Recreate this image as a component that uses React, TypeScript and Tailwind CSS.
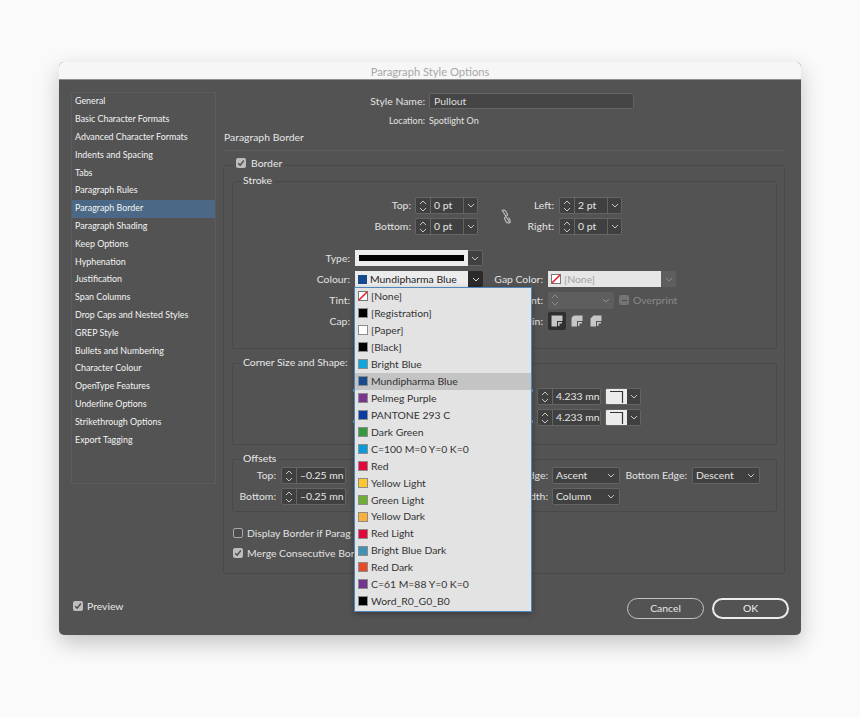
import React from "react";

const FONT = "font-['Lato','Open_Sans',sans-serif]";

const sidebar = [
  "General", "Basic Character Formats", "Advanced Character Formats", "Indents and Spacing", "Tabs",
  "Paragraph Rules", "Paragraph Border", "Paragraph Shading", "Keep Options", "Hyphenation", "Justification",
  "Span Columns", "Drop Caps and Nested Styles", "GREP Style", "Bullets and Numbering", "Character Colour",
  "OpenType Features", "Underline Options", "Strikethrough Options", "Export Tagging",
];

const colours: { name: string; c: string; none?: boolean; sel?: boolean }[] = [
  { name: "[None]", c: "#ffffff", none: true },
  { name: "[Registration]", c: "#000000" },
  { name: "[Paper]", c: "#ffffff" },
  { name: "[Black]", c: "#000000" },
  { name: "Bright Blue", c: "#0fa5df" },
  { name: "Mundipharma Blue", c: "#164b8e", sel: true },
  { name: "Pelmeg Purple", c: "#7b3590" },
  { name: "PANTONE 293 C", c: "#0a3da3" },
  { name: "Dark Green", c: "#35983f" },
  { name: "C=100 M=0 Y=0 K=0", c: "#0a9bd8" },
  { name: "Red", c: "#e4053a" },
  { name: "Yellow Light", c: "#fdc62c" },
  { name: "Green Light", c: "#6dac35" },
  { name: "Yellow Dark", c: "#f8b03a" },
  { name: "Red Light", c: "#e4063c" },
  { name: "Bright Blue Dark", c: "#4092b5" },
  { name: "Red Dark", c: "#e64a2a" },
  { name: "C=61 M=88 Y=0 K=0", c: "#74348e" },
  { name: "Word_R0_G0_B0", c: "#000000" },
];

function Chevron({ up, className }: { up?: boolean; className?: string }) {
  return (
    <svg width="8" height="5" viewBox="0 0 8 5" className={className} fill="none" stroke="currentColor" strokeWidth="1">
      <path d={up ? "M1 4L4 1L7 4" : "M1 1L4 4L7 1"} />
    </svg>
  );
}

function Stepper() {
  return (
    <div className="flex w-[14px] shrink-0 flex-col items-center justify-center gap-[2px] text-[#c4c4c4]">
      <Chevron up />
      <Chevron />
    </div>
  );
}

function Spinner({ value, w, arrow }: { value: string; w: string; arrow?: boolean }) {
  return (
    <div className={`flex h-[17px] ${w} shrink-0 overflow-hidden rounded-[2px] border border-[#646464] bg-[#404040] text-[#e6e6e6]`}>
      <Stepper />
      <div className="flex min-w-0 flex-1 items-center whitespace-nowrap border-l border-[#646464] pl-[3px]">{value}</div>
      {arrow && (
        <div className="flex w-[14px] shrink-0 items-center justify-center border-l border-[#646464] text-[#c4c4c4]">
          <Chevron />
        </div>
      )}
    </div>
  );
}

function Select({ value }: { value: string }) {
  return (
    <div className="flex h-[17px] w-[68px] shrink-0 items-center justify-between rounded-[2px] border border-[#646464] bg-[#404040] pl-[3px] pr-[4px] text-[#e6e6e6]">
      <span>{value}</span>
      <Chevron className="text-[#c4c4c4]" />
    </div>
  );
}

function Label({ w, children, ml }: { w: string; children: React.ReactNode; ml?: string }) {
  return <div className={`${w} ${ml ?? ""} shrink-0 whitespace-nowrap text-right text-[#e2e2e2]`}>{children}</div>;
}

function Check({ on }: { on?: boolean }) {
  return on ? (
    <div className="flex h-[10px] w-[10px] shrink-0 items-center justify-center rounded-[2px] bg-[#bdbdbd]">
      <svg width="8" height="8" viewBox="0 0 8 8" fill="none" stroke="#4a4a4a" strokeWidth="1.3">
        <path d="M1.2 4.2L3.2 6.2L6.8 1.5" />
      </svg>
    </div>
  ) : (
    <div className="h-[10px] w-[10px] shrink-0 rounded-[2px] border border-[#a8a8a8] bg-[#4c4c4c]" />
  );
}

function NoneSwatch({ size }: { size: string }) {
  return (
    <svg viewBox="0 0 10 10" className={`${size} shrink-0`}>
      <rect x="0.5" y="0.5" width="9" height="9" fill="#fff" stroke="#777" />
      <path d="M1 9L9 1" stroke="#ee1c25" strokeWidth="1.6" />
    </svg>
  );
}

function Join({ d }: { d: string }) {
  return (
    <svg width="12" height="12" viewBox="0 0 12 12">
      <path d={d} fill="#c6c6c6" />
      <path d="M7 7H11V8.5H8.5V11H7Z" fill="#c6c6c6" />
    </svg>
  );
}

function CornerBox() {
  return (
    <div className="ml-1 flex h-[17px] w-[36px] shrink-0 overflow-hidden rounded-[2px] border border-[#646464]">
      <div className="flex w-[21px] items-center justify-center bg-[#ececec]">
        <svg width="15" height="13" viewBox="0 0 15 13" fill="none" stroke="#333" strokeWidth="1.2">
          <path d="M1 1.5H13.5V13" />
        </svg>
      </div>
      <div className="flex flex-1 items-center justify-center bg-[#404040] text-[#c4c4c4]">
        <Chevron />
      </div>
    </div>
  );
}

export default function App() {
  const line = "border-[#494949]";
  return (
    <div className={`h-[717px] w-[860px] overflow-hidden bg-[#fafafa] pl-[59px] pt-[62px] text-[10.4px] leading-none ${FONT}`}>
      <div className="relative h-[573px] w-[742px] overflow-hidden rounded-[5px] bg-[#535353] shadow-[0_8px_22px_rgba(0,0,0,0.22)]">
        <div className="flex h-[18px] items-center justify-center border-b border-[#8e8e8e] bg-[#f6f6f6] pt-[2px] text-[11.2px] text-[#a9a9a9]">
          Paragraph Style Options
        </div>

        <div className="flex pl-3 pt-3">
          <div className="h-[392px] w-[145px] shrink-0 border border-[#5b5b5b]">
            {sidebar.map((s) => (
              <div
                key={s}
                className={`flex h-[17.8px] items-center whitespace-nowrap pl-[3px] text-[8.9px] text-[#f4f4f4] ${s === "Paragraph Border" ? "bg-[#4b6986]" : ""}`}
              >
                {s}
              </div>
            ))}
          </div>

          <div className="ml-[7px] w-[562px]">
            <div className="mt-px flex h-4 items-center">
              <Label w="w-[202px]">Style Name:</Label>
              <div className="ml-1 flex h-4 w-[205px] items-center rounded-[2px] border border-[#646464] bg-[#454545] pl-1 text-[#dedede]">Pullout</div>
            </div>
            <div className="mt-[5px] flex h-3 items-center text-[9px] text-[#e2e2e2]">
              <Label w="w-[202px]">Location:</Label>
              <span className="ml-1">Spotlight On</span>
            </div>
            <div className="mt-[4px] flex h-[14px] items-center pl-px text-[#e6e6e6]">Paragraph Border</div>
            <div className="mt-[6px] border-t border-[#5c5c5c]" />

            <div className={`relative mt-[14px] h-[409px] rounded-[3px] border ${line} pl-[8px] pt-[15px]`}>
              <div className="absolute -top-[9px] left-[10px] flex h-[12px] items-center gap-[5px] bg-[#535353] px-[2px] text-[#e8e8e8]">
                <Check on />
                <span>Border</span>
              </div>

              <div className={`relative h-[168px] w-[545px] rounded-[3px] border ${line} pt-[15px]`}>
                <div className="absolute -top-[8px] left-[8px] bg-[#535353] px-[2px] leading-[12px] text-[#e8e8e8]">Stroke</div>

                <div className="flex">
                  <div className="flex w-[245px] flex-col gap-[4px]">
                    <div className="flex items-center">
                      <Label w="w-[178px]">Top:</Label>
                      <div className="ml-1"><Spinner value="0 pt" w="w-[63px]" arrow /></div>
                    </div>
                    <div className="flex items-center">
                      <Label w="w-[178px]">Bottom:</Label>
                      <div className="ml-1"><Spinner value="0 pt" w="w-[63px]" arrow /></div>
                    </div>
                  </div>
                  <div className="flex w-[40px] shrink-0 items-center pl-[22px]">
                    <svg width="12" height="15" viewBox="0 0 12 15" fill="none" stroke="#b8b8b8" strokeWidth="1.2">
                      <path d="M2 1L10 14" />
                      <path d="M2.2 1.4Q5 0.4 6 2.6L7.4 5.2Q7.8 6.6 6.2 7" />
                      <path d="M5.8 8Q4.2 8.4 4.6 9.8L6 12.4Q7 14.6 9.8 13.6Q10.6 12 9.6 10.4L8.6 8.6" />
                    </svg>
                  </div>
                  <div className="flex flex-col gap-[4px]">
                    <div className="flex items-center">
                      <Label w="w-[36px]">Left:</Label>
                      <div className="ml-[5px]"><Spinner value="2 pt" w="w-[63px]" arrow /></div>
                    </div>
                    <div className="flex items-center">
                      <Label w="w-[36px]">Right:</Label>
                      <div className="ml-[5px]"><Spinner value="0 pt" w="w-[63px]" arrow /></div>
                    </div>
                  </div>
                </div>

                <div className="mt-[15px] flex h-4 items-center">
                  <Label w="w-[117px]">Type:</Label>
                  <div className="ml-[5px] flex h-4 w-[113px] items-center bg-[#ececec] px-[4px]">
                    <div className="h-[6px] w-full bg-black" />
                  </div>
                  <div className="flex h-4 w-[15px] items-center justify-center rounded-r-[2px] border border-l-0 border-[#646464] bg-[#404040] text-[#c4c4c4]"><Chevron /></div>
                </div>

                <div className="mt-[5px] flex h-4 items-center">
                  <Label w="w-[117px]">Colour:</Label>
                  <div className="ml-[5px] flex h-4 w-[113px] items-center gap-[3px] bg-[#ececec] pl-[3px] text-[#222]">
                    <div className="h-[9px] w-[9px] bg-[#164b8e]" />
                    <span>Mundipharma Blue</span>
                  </div>
                  <div className="flex h-4 w-[15px] items-center justify-center rounded-r-[2px] bg-[#2b2b2b] text-[#e0e0e0]"><Chevron /></div>
                  <Label w="w-[60px]">Gap Color:</Label>
                  <div className="ml-[5px] flex h-4 w-[113px] items-center gap-[3px] bg-[#e6e6e6] pl-[3px] text-[#a4a4a4]">
                    <NoneSwatch size="h-[10px] w-[10px]" />
                    <span>[None]</span>
                  </div>
                  <div className="flex h-4 w-[15px] items-center justify-center rounded-r-[2px] bg-[#5e5e5e] text-[#8c8c8c]"><Chevron /></div>
                </div>

                <div className="mt-[5px] flex h-4 items-center">
                  <Label w="w-[117px]">Tint:</Label>
                  <Label w="w-[193px]">Gap Tint:</Label>
                  <div className="ml-[5px] flex h-[17px] w-[66px] items-center justify-between rounded-[2px] bg-[#5e5e5e] pr-[4px] text-[#8c8c8c]">
                    <div className="flex w-[14px] flex-col items-center gap-[2px]"><Chevron up /><Chevron /></div>
                    <Chevron />
                  </div>
                  <div className="ml-[5px] flex h-[10px] w-[10px] items-center justify-center rounded-[2px] bg-[#747474]">
                    <div className="h-px w-[5px] bg-[#4a4a4a]" />
                  </div>
                  <span className="ml-[4px] text-[#8a8a8a]">Overprint</span>
                </div>

                <div className="mt-[4px] flex h-[18px] items-center">
                  <Label w="w-[117px]">Cap:</Label>
                  <Label w="w-[193px]">Join:</Label>
                  <div className="ml-[5px] flex items-center">
                    <div className="flex h-[18px] w-[18px] items-center justify-center rounded-[2px] bg-[#2f2f2f]">
                      <Join d="M0.5 0.5H11.5V6H6V11.5H0.5Z" />
                    </div>
                    <div className="ml-px flex h-[18px] w-[19px] items-center justify-center">
                      <Join d="M4.5 0.5H11.5V6H6V11.5H0.5V4.5A4 4 0 0 1 4.5 0.5Z" />
                    </div>
                    <div className="flex h-[18px] w-[20px] items-center justify-center">
                      <Join d="M3.5 0.5H11.5V6H6V11.5H0.5V3.5Z" />
                    </div>
                  </div>
                </div>
              </div>

              <div className={`relative mt-[14px] h-[82px] w-[545px] rounded-[3px] border ${line} pl-[304px] pt-[24px]`}>
                <div className="absolute -top-[8px] left-[8px] bg-[#535353] px-[2px] leading-[12px] text-[#e8e8e8]">Corner Size and Shape:</div>
                <div className="flex flex-col gap-[4px]">
                  <div className="flex"><Spinner value="4.233 mn" w="w-[64px]" /><CornerBox /></div>
                  <div className="flex"><Spinner value="4.233 mn" w="w-[64px]" /><CornerBox /></div>
                </div>
              </div>

              <div className={`relative mt-[14px] h-[53px] w-[545px] rounded-[3px] border ${line} pt-[7px]`}>
                <div className="absolute -top-[8px] left-[8px] bg-[#535353] px-[2px] leading-[12px] text-[#e8e8e8]">Offsets</div>
                <div className="flex flex-col gap-[4px]">
                  <div className="flex items-center">
                    <Label w="w-[43px]">Top:</Label>
                    <div className="ml-[5px]"><Spinner value="–0.25 mn" w="w-[65px]" /></div>
                    <Label w="w-[202px]">Top Edge:</Label>
                    <div className="ml-1"><Select value="Ascent" /></div>
                    <Label w="w-[62px]" ml="ml-[5px]">Bottom Edge:</Label>
                    <div className="ml-[5px]"><Select value="Descent" /></div>
                  </div>
                  <div className="flex items-center">
                    <Label w="w-[43px]">Bottom:</Label>
                    <div className="ml-[5px]"><Spinner value="–0.25 mn" w="w-[65px]" /></div>
                    <Label w="w-[202px]">Width:</Label>
                    <div className="ml-1"><Select value="Column" /></div>
                  </div>
                </div>
              </div>

              <div className="mt-[15px] flex h-3 items-center gap-[4px] pl-px text-[#e2e2e2]">
                <Check />
                <span className="whitespace-nowrap">Display Border if Parag</span>
              </div>
              <div className="mt-[8px] flex h-3 items-center gap-[4px] pl-px text-[#e2e2e2]">
                <Check on />
                <span className="whitespace-nowrap">Merge Consecutive Bor</span>
              </div>
            </div>
          </div>
        </div>

        <div className="mt-[24px] flex items-center justify-between pl-[14px] pr-[12px]">
          <div className="mb-[5px] flex items-center gap-[4px] text-[#e8e8e8]">
            <Check on />
            <span>Preview</span>
          </div>
          <div className="flex gap-2">
            <div className="flex h-[21px] w-[77px] items-center justify-center rounded-full border border-[#c4c4c4] text-[#e8e8e8]">Cancel</div>
            <div className="flex h-[21px] w-[77px] items-center justify-center rounded-full border-2 border-[#ececec] text-[#f0f0f0]">OK</div>
          </div>
        </div>

        {/* open colour menu */}
        <div className="absolute left-[295px] top-[225px] h-[325px] w-[178px] border border-[#4f87bd] bg-[#e3e3e3] shadow-[0_2px_6px_rgba(0,0,0,0.3)]">
          {colours.map((c) => (
            <div key={c.name} className={`flex h-[16.94px] items-center gap-[3px] whitespace-nowrap pl-[3px] text-[#333] ${c.sel ? "bg-[#c4c4c4]" : ""}`}>
              {c.none ? (
                <NoneSwatch size="h-[10px] w-[10px]" />
              ) : (
                <div className="h-[10px] w-[10px] shrink-0 border border-[#8c8c8c]" style={{ backgroundColor: c.c }} />
              )}
              <span>{c.name}</span>
            </div>
          ))}
          <div className="absolute -left-[2px] top-[101px] h-[3px] w-[2px] bg-[#4f87bd]" />
          <div className="absolute -left-[2px] top-[132px] h-[3px] w-[2px] bg-[#4f87bd]" />
          <div className="absolute -right-[2px] top-[101px] h-[3px] w-[2px] bg-[#4f87bd]" />
          <div className="absolute -right-[2px] top-[132px] h-[3px] w-[2px] bg-[#4f87bd]" />
        </div>
      </div>
    </div>
  );
}
